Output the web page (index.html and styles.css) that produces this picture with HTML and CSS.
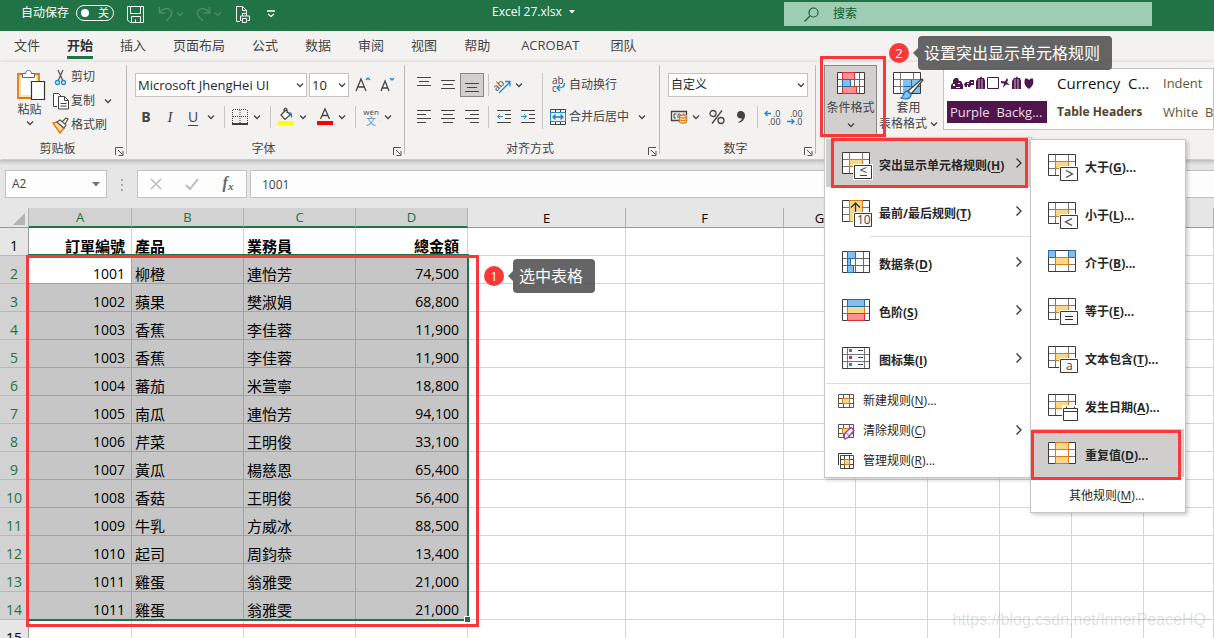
FILE: index.html
```html
<!DOCTYPE html>
<html lang="zh-CN">
<head>
<meta charset="utf-8">
<title>Excel 27.xlsx</title>
<link rel="stylesheet" href="styles.css">
</head>
<body>
<svg class="sprite" aria-hidden="true">
  <symbol id="chev" viewBox="0 0 8 6"><path d="M1 1.500l3 3 3-3" fill="none" stroke="currentColor" stroke-width="1.300"/></symbol>
  <symbol id="arrow-r" viewBox="0 0 8 12"><path d="M1.500 1.500L6 6l-4.500 4.500" fill="none" stroke="#333" stroke-width="1.300"/></symbol>
  <symbol id="launcher" viewBox="0 0 9 9"><path d="M.5 8V.5H8M3 3l4.500 4.500M8 4v4.500H3.500" fill="none" stroke="#555" stroke-width="1"/></symbol>
  <symbol id="grid" viewBox="0 0 28 22"><path d="M.5.5h27v21H.5z" fill="#fff"/><path d="M7.500 1v20M20.500 1v20M1 7.500h26M1 14.500h26" stroke="#777" fill="none"/><path d="M.5.5h27v21H.5z" fill="none" stroke="#3b3838"/></symbol>
  <symbol id="grid-mid" viewBox="0 0 31 28"><use href="#grid" width="28" height="22"/><path d="M7.500 7.500h13v7h-13z" fill="#fad88a" stroke="#e07a10"/><path d="M11 12h20v16H11z" fill="#fff"/><path d="M12.500 13.500h17v13h-17z" fill="#fafafa" stroke="#3b3838"/></symbol>
</svg>

<header class="titlebar">
  <div class="quick">
    <span class="autosave" id="autosave">自动保存</span>
    <button class="switch" role="switch" aria-checked="false" aria-labelledby="autosave"><i></i><span>关</span></button>
    <button class="qbtn save" aria-label="保存"><svg width="17" height="17" fill="none" stroke="#fff"><path d="M.5.5h16v16H3L.5 14zM3.500.5v7h10v-7M4.500 16.500v-6h9v6M8.500 13.500v3"/></svg></button>
    <button class="qbtn dim" aria-label="撤消"><svg width="15" height="16" fill="none" stroke="currentColor" stroke-width="1.500"><path d="M1.500 1v6h6M1.500 7C4 3 9 1 12 4s2 5-1 8l-3 3"/></svg></button>
    <button class="qbtn dim tiny" aria-label="撤消选项"><svg width="8" height="6"><use href="#chev"/></svg></button>
    <button class="qbtn dim redo" aria-label="恢复"><svg width="15" height="16" fill="none" stroke="currentColor" stroke-width="1.500"><path d="M13.500 1v6h-6M13.500 7C11 3 6 1 3 4s-2 5 1 8l3 3"/></svg></button>
    <button class="qbtn dim tiny" aria-label="恢复选项"><svg width="8" height="6"><use href="#chev"/></svg></button>
    <button class="qbtn print" aria-label="打印预览"><svg width="14" height="17" fill="none" stroke="#fff"><path d="M4 15.500H.5V.5h6l4 4V7M6.500.5v4h4M6.500 10V7.500h4V10M5.500 14.500h-1v-4.500h9v4.500h-2M6.500 12.500h4v4h-4z"/></svg></button>
    <button class="qbtn custom" aria-label="自定义快速访问工具栏"><svg width="8" height="8" fill="none" stroke="#fff"><path d="M0 1h8" stroke-width="1.500"/><path d="M1 4l3 2.500L7 4" stroke-width="1.300"/></svg></button>
  </div>
  <button class="docname">Excel 27.xlsx <svg width="6" height="4"><path d="M0 0h6L3 3.500z" fill="#fff"/></svg></button>
  <label class="search"><svg width="15" height="15" fill="none" stroke="#17603a" stroke-width="1.200"><circle cx="9.500" cy="5.500" r="4.500"/><path d="M6 9l-5.500 5.500"/></svg><input type="text" placeholder="搜索" aria-label="搜索"></label>
</header>

<nav class="tabs">
  <a href="#">文件</a><a href="#" class="active">开始</a><a href="#">插入</a><a href="#">页面布局</a><a href="#">公式</a><a href="#">数据</a><a href="#">审阅</a><a href="#">视图</a><a href="#">帮助</a><a href="#" class="addin">ACROBAT</a><a href="#">团队</a>
</nav>

<div class="ribbon">
  <section class="group clipboard">
    <div class="clip-body">
      <button class="paste"><svg width="28" height="31" fill="none"><path d="M1 5h21v24H1z" fill="#fbe3ae" stroke="#e07a10" stroke-width="1.800"/><path d="M4 8h15v18H4z" fill="#fff"/><path d="M5.500 8.500v-4h3c0-4 6-4 6 0h3v4z" fill="#fff" stroke="#666"/><path d="M14.500 12.500h13v18h-13z" fill="#fff" stroke="#333" stroke-width="1.200"/></svg><span>粘贴</span><svg class="chev" width="8" height="6"><use href="#chev"/></svg></button>
      <div class="clip-list">
        <button><svg width="18" height="17" fill="none"><path d="M6 1l5 11M11 1L6 12" stroke="#555" stroke-width="1.300"/><circle cx="5.500" cy="13.500" r="2" stroke="#1e88cf" stroke-width="1.300"/><circle cx="11.500" cy="13.500" r="2" stroke="#1e88cf" stroke-width="1.300"/></svg>剪切</button>
        <button><svg width="18" height="17" fill="none" stroke="#444"><path d="M5 13.500H1.500v-13h5l3 3M6.500 3.500h6l4 4v8.500h-10zM12.500 3.500v4h4" fill="#fff"/><path d="M8.500 10.500h6M8.500 13h6"/></svg>复制<svg class="chev gap-copy" width="8" height="6"><use href="#chev"/></svg></button>
        <button><svg width="18" height="17" fill="none"><path d="M1 6l4-1 7 6-4 5z" fill="#fcd9a0" stroke="#e07a10" stroke-width="1.400"/><path d="M5 5l3-2 6 5-2 3zM10 5l4-4 2 1-3 5" fill="#fff" stroke="#555" stroke-width="1.200"/></svg>格式刷</button>
      </div>
    </div>
    <footer><span>剪贴板</span><button aria-label="剪贴板设置"><svg width="9" height="9"><use href="#launcher"/></svg></button></footer>
  </section>

  <section class="group font">
    <div class="row fields">
      <div class="pick name"><select aria-label="字体"><option>Microsoft JhengHei UI</option></select><svg width="8" height="6"><use href="#chev"/></svg></div>
      <div class="pick size"><select aria-label="字号"><option>10</option></select><svg width="8" height="6"><use href="#chev"/></svg></div>
      <button class="w24" aria-label="增大字号"><svg width="16" height="17" fill="none"><path d="M0 14L5 2l5 12M2 10h6" stroke="#444" stroke-width="1.300"/><path d="M10 3l2-2 2 2" stroke="#1e88cf" stroke-width="1.300"/></svg></button>
      <button class="w24" aria-label="减小字号"><svg width="16" height="17" fill="none"><path d="M1 14L5 4l4 10M2.500 11h5" stroke="#444" stroke-width="1.300"/><path d="M10 1l2 2 2-2" stroke="#1e88cf" stroke-width="1.300"/></svg></button>
    </div>
    <div class="row">
      <button class="w24 bold">B</button><button class="w24 ital">I</button><button class="w22 under">U</button><button class="more" aria-label="下划线选项"><svg width="8" height="6"><use href="#chev"/></svg></button><hr>
      <button class="w20" aria-label="边框"><svg width="16" height="16" fill="none" stroke="#444"><path d="M.5 1v13M15.500 1v13M8 1v13M1 .5h14M1 7.500h14" stroke-dasharray="1 1"/><path d="M0 15h16" stroke="#000" stroke-width="1.500"/></svg></button><button class="more" aria-label="边框选项"><svg width="8" height="6"><use href="#chev"/></svg></button><hr>
      <button class="w20" aria-label="填充颜色"><svg width="16" height="18" fill="none"><path d="M0 13h16v4H0z" fill="#ff0"/><path d="M3 7l5-5 4 5-5 4.500zM6 4V1.500C7-.5 9 0 9 2v3" fill="#fff" stroke="#444" stroke-width="1.200"/><path d="M11 4c3 0 3.500 3 3 6-1-1-2-3-3-6z" fill="#1e78bf"/></svg></button><button class="more" aria-label="填充选项"><svg width="8" height="6"><use href="#chev"/></svg></button>
      <button class="w20 fcolor" aria-label="字体颜色"><svg width="16" height="18" fill="none"><path d="M0 13h16v4H0z" fill="#f00"/><path d="M3.500 11L8 .8 12.500 11M5 7.500h6" stroke="#444" stroke-width="1.300"/></svg></button><button class="more" aria-label="颜色选项"><svg width="8" height="6"><use href="#chev"/></svg></button><hr>
      <button class="w20 pinyin"><span>wén</span><b>文</b></button><button class="more" aria-label="拼音选项"><svg width="8" height="6"><use href="#chev"/></svg></button>
    </div>
    <footer><span>字体</span><button aria-label="字体设置"><svg width="9" height="9"><use href="#launcher"/></svg></button></footer>
  </section>

  <section class="group align">
    <div class="align-body">
      <div class="align-left">
        <div class="row">
          <button class="w24" aria-label="顶端对齐"><svg class="ln" width="14" height="16"><path d="M0 .5h14M2 4.500h10M0 8.500h14"/></svg></button><button class="w24" aria-label="垂直居中"><svg class="ln" width="14" height="16"><path d="M0 3.500h14M2 7.500h10M0 11.500h14"/></svg></button><button class="w24 on" aria-label="底端对齐"><svg class="ln" width="14" height="16"><path d="M0 6.500h14M2 10.500h10M0 14.500h14"/></svg></button><hr class="slim">
          <button class="w20" aria-label="方向"><svg width="16" height="16" fill="none"><text x="-2" y="11" transform="rotate(-42 5 7)" class="ab">ab</text><path d="M5 16L16 5M11 4.500h5v5" stroke="#1e88cf" stroke-width="1.300"/></svg></button><button class="more" aria-label="方向选项"><svg width="8" height="6"><use href="#chev"/></svg></button>
        </div>
        <div class="row">
          <button class="w24" aria-label="左对齐"><svg class="ln" width="14" height="14"><path d="M0 .5h14M0 4.500h9M0 8.500h14M0 12.500h9"/></svg></button><button class="w24" aria-label="居中"><svg class="ln" width="14" height="14"><path d="M0 .5h14M2 4.500h10M0 8.500h14M2 12.500h10"/></svg></button><button class="w24" aria-label="右对齐"><svg class="ln" width="14" height="14"><path d="M0 .5h14M5 4.500h9M0 8.500h14M5 12.500h9"/></svg></button><hr class="slim">
          <button class="w24" aria-label="减少缩进量"><svg class="ln" width="14" height="14"><path d="M0 .5h14M8 4.500h6M8 8.500h6M0 12.500h14"/><path d="M6 6.500H.8M3 4L.7 6.500 3 9" stroke="#1e88cf"/></svg></button><button class="w24" aria-label="增加缩进量"><svg class="ln" width="14" height="14"><path d="M0 .5h14M8 4.500h6M8 8.500h6M0 12.500h14"/><path d="M0 6.500h5.200M3 4l2.300 2.500L3 9" stroke="#1e88cf"/></svg></button>
        </div>
      </div>
      <div class="align-right">
        <button class="row wide"><svg width="16" height="18" fill="none"><text x="2" y="8" class="ab">ab</text><text x="2" y="16" class="ab">c</text><path d="M14.500 7c0 4-2 5-7 5M10 9l-3 3 3 3" stroke="#1e88cf" stroke-width="1.400"/></svg>自动换行</button>
        <button class="row wide"><svg width="16" height="16" fill="none" stroke="#444"><path d="M.5.5h15v15H.5zM5.500.5v3M10.500.5v3M5.500 12.500v3M10.500 12.500v3"/><path d="M.5 3.500h15v9H.5z" fill="#eaf4fb" stroke="#1e88cf"/><path d="M3 8h10M5.500 5.500L3 8l2.500 2.500M10.500 5.500L13 8l-2.500 2.500" stroke="#1e78bf" stroke-width="1.300"/></svg>合并后居中<svg class="chev gap-merge" width="8" height="6"><use href="#chev"/></svg></button>
      </div>
    </div>
    <footer><span>对齐方式</span><button aria-label="对齐设置"><svg width="9" height="9"><use href="#launcher"/></svg></button></footer>
  </section>

  <section class="group number">
    <div class="row fields"><div class="pick wide"><select aria-label="数字格式"><option>自定义</option></select><svg width="8" height="6"><use href="#chev"/></svg></div></div>
    <div class="row">
      <button class="w22" aria-label="会计数字格式"><svg width="17" height="14" fill="none"><path d="M9 10.500H1.500v-9h15V5" stroke="#444" stroke-width="1.300"/><path d="M6.500 4H4v4h2M8 8V5c0-1.500 2.500-1.500 2.500 0M13 4h1.500" stroke="#444"/><path d="M9.500 6.500v5c0 2 7 2 7 0v-5c0-2-7-2-7 0z" fill="#fff" stroke="#e07a10" stroke-width="1.300"/><path d="M9.500 6.500c0 2 7 2 7 0M9.500 9c0 2 7 2 7 0" stroke="#e07a10" stroke-width="1.300"/></svg></button><button class="more" aria-label="货币选项"><svg width="8" height="6"><use href="#chev"/></svg></button>
      <button class="w28" aria-label="百分比"><svg width="16" height="16" fill="none" stroke="#444" stroke-width="1.300"><circle cx="4" cy="4.500" r="3"/><circle cx="12" cy="11.500" r="3"/><path d="M13 1.500L3 14.500"/></svg></button>
      <button class="w20" aria-label="千位分隔"><svg width="10" height="16"><path d="M4.500 2c3 0 4.500 2 4.500 4.500 0 4-3 6.500-6.500 7.500v-1.200C4.500 12 6 10.800 6 9.500 3 10 1 8.500 1 6s1.500-4 3.500-4z" fill="#444"/></svg></button><hr>
      <button class="w20" aria-label="增加小数位"><svg width="16" height="17"><text x="8" y="8" class="dec">.0</text><text x="3" y="16" class="dec">.00</text><path d="M6 4.500H0M2.500 2L0 4.500 2.500 7" fill="none" stroke="#1e88cf" stroke-width="1.300"/></svg></button><button class="w24" aria-label="减少小数位"><svg width="16" height="17"><text x="3" y="8" class="dec">.00</text><text x="8" y="16" class="dec">.0</text><path d="M0 12.500h7M4.500 10L7 12.500 4.500 15" fill="none" stroke="#1e88cf" stroke-width="1.300"/></svg></button>
    </div>
    <footer><span>数字</span><button aria-label="数字设置"><svg width="9" height="9"><use href="#launcher"/></svg></button></footer>
  </section>

  <section class="group styles">
    <button class="big pressed" aria-expanded="true"><svg width="28" height="22" fill="none"><path d="M.5.5h27v21H.5z" fill="#fff"/><path d="M5.500 1v20M17.500 1v20M22.500 1v20M1 7.500h26M1 14.500h26" stroke="#666"/><path d="M.5.5h27v21H.5z" stroke="#3b3838"/><path d="M5.500.5h12v7h-12zM5.500 14.500h14v7h-14z" fill="#ff9090" stroke="#d8302f"/><path d="M5.500 7.500h8v7h-8z" fill="#83beec" stroke="#1a6fb5"/></svg><span>条件格式</span><svg class="chev" width="8" height="6"><use href="#chev"/></svg></button>
    <button class="big table"><svg width="31" height="28" fill="none"><use href="#grid" width="28" height="22"/><path d="M10 8h17v13H10z" fill="#83beec"/><path d="M10.500 14.500H27M18.500 8v13" stroke="#1a6fb5"/><path d="M29 7L15 19l3 3L30 8z" fill="#fff" stroke="#444" stroke-width="1.200"/><path d="M14 19c-4 0-3 6-6 7 5 2 10 1 10-4z" fill="#83beec" stroke="#1a6fb5" stroke-width="1.200"/></svg><span>套用</span><span>表格格式 <svg class="chev" width="8" height="6"><use href="#chev"/></svg></span></button>
    <div class="gallery">
      <button class="g-icons" aria-label="节日样式"><svg width="84" height="14" fill="#4f164c"><path d="M0 12V9l2-2V4l2-2h3l1 3h2l2 4v4H0z"/><path d="M2 8h2v2H2zM7 7h2v1H7zM5 11h4v1H5z" fill="#fff"/><path d="M13 8l2-2h3l1-2h4v5h-3l-1 2h-2V9h-1v2h-2z"/><path d="M16 7h2v1h-2zM20 6h2v1h-2z" fill="#fff"/><path d="M25 5l2-3h2l1-2 1 2h2l1 3v8h-9z"/><path d="M28 3v10M31 3v10" stroke="#fff" stroke-width=".7"/><path d="M36.500 1.500h11v11h-11z" fill="#fff" stroke="#4f164c"/><path d="M50 5l4 .5L56 2l1 2-1 2.500 3 2.500-4-.5-3 3.500 1-4.500-3-.5z"/><path d="M61 5l2-3h2l1-2 1 2h2l1 3v8h-9z"/><path d="M64 3v10M67 3v10" stroke="#fff" stroke-width=".7"/><path d="M78 13c-5-3-5-7-4-10 2-1 3 0 4 1 1-1 3-2 4-1 1 4 0 7-4 10z"/></svg></button><button class="g-cur">Currency&nbsp; C...</button><button class="g-brown">Indent</button>
      <button class="g-purple">Purple&nbsp; Backg...</button><button class="g-head">Table Headers</button><button class="g-brown">White&nbsp; Ba</button>
    </div>
  </section>
</div>

<div class="formula">
  <div class="namebox"><input type="text" value="A2" aria-label="名称框"><svg width="8" height="5"><path d="M0 0h8L4 4.500z" fill="#777"/></svg></div>
  <svg class="dots" width="3" height="12" fill="#aaa"><path d="M0 0h2v2H0zM0 5h2v2H0zM0 10h2v2H0z"/></svg>
  <div class="fx">
    <button aria-label="取消"><svg width="12" height="12"><path d="M1 1l10 10M11 1L1 11" stroke="#bbb" stroke-width="1.500"/></svg></button>
    <button aria-label="输入"><svg width="14" height="12" fill="none"><path d="M1 7l4 4L13 1" stroke="#bbb" stroke-width="2"/></svg></button>
    <button class="fxi" aria-label="插入函数">f<small>x</small></button>
  </div>
  <input class="fvalue" type="text" value="1001" aria-label="编辑栏">
</div>

<main class="sheet">
  <table>
    <colgroup><col class="c-row"><col class="c-a"><col class="c-m"><col class="c-m"><col class="c-m"><col class="c-l"><col class="c-l"><col class="c-s"><col class="c-s"><col class="c-s"><col class="c-s"><col class="c-s"><col></colgroup>
    <thead><tr><th class="corner"><svg width="13" height="13"><path d="M12 0v12H0z" fill="#b4b4b4"/></svg></th><th class="sel">A</th><th class="sel">B</th><th class="sel">C</th><th class="sel">D</th><th>E</th><th>F</th><th>G</th><th></th><th></th><th></th><th></th><th></th></tr></thead>
    <tbody>
      <tr class="head"><th>1</th><td>訂單編號</td><td>產品</td><td>業務員</td><td>總金額</td><td></td><td></td><td></td><td></td><td></td><td></td><td></td><td></td></tr>
      <tr class="pick-row"><th>2</th><td class="cur">1001</td><td>柳橙</td><td>連怡芳</td><td>74,500</td><td></td><td></td><td></td><td></td><td></td><td></td><td></td><td></td></tr>
      <tr class="pick-row"><th>3</th><td>1002</td><td>蘋果</td><td>樊淑娟</td><td>68,800</td><td></td><td></td><td></td><td></td><td></td><td></td><td></td><td></td></tr>
      <tr class="pick-row"><th>4</th><td>1003</td><td>香蕉</td><td>李佳蓉</td><td>11,900</td><td></td><td></td><td></td><td></td><td></td><td></td><td></td><td></td></tr>
      <tr class="pick-row"><th>5</th><td>1003</td><td>香蕉</td><td>李佳蓉</td><td>11,900</td><td></td><td></td><td></td><td></td><td></td><td></td><td></td><td></td></tr>
      <tr class="pick-row"><th>6</th><td>1004</td><td>蕃茄</td><td>米萱寧</td><td>18,800</td><td></td><td></td><td></td><td></td><td></td><td></td><td></td><td></td></tr>
      <tr class="pick-row"><th>7</th><td>1005</td><td>南瓜</td><td>連怡芳</td><td>94,100</td><td></td><td></td><td></td><td></td><td></td><td></td><td></td><td></td></tr>
      <tr class="pick-row"><th>8</th><td>1006</td><td>芹菜</td><td>王明俊</td><td>33,100</td><td></td><td></td><td></td><td></td><td></td><td></td><td></td><td></td></tr>
      <tr class="pick-row"><th>9</th><td>1007</td><td>黃瓜</td><td>楊慈恩</td><td>65,400</td><td></td><td></td><td></td><td></td><td></td><td></td><td></td><td></td></tr>
      <tr class="pick-row"><th>10</th><td>1008</td><td>香菇</td><td>王明俊</td><td>56,400</td><td></td><td></td><td></td><td></td><td></td><td></td><td></td><td></td></tr>
      <tr class="pick-row"><th>11</th><td>1009</td><td>牛乳</td><td>方威冰</td><td>88,500</td><td></td><td></td><td></td><td></td><td></td><td></td><td></td><td></td></tr>
      <tr class="pick-row"><th>12</th><td>1010</td><td>起司</td><td>周鈞恭</td><td>13,400</td><td></td><td></td><td></td><td></td><td></td><td></td><td></td><td></td></tr>
      <tr class="pick-row"><th>13</th><td>1011</td><td>雞蛋</td><td>翁雅雯</td><td>21,000</td><td></td><td></td><td></td><td></td><td></td><td></td><td></td><td></td></tr>
      <tr class="pick-row"><th>14</th><td>1011</td><td>雞蛋</td><td>翁雅雯</td><td>21,000</td><td></td><td></td><td></td><td></td><td></td><td></td><td></td><td></td></tr>
      <tr><th>15</th><td></td><td></td><td></td><td></td><td></td><td></td><td></td><td></td><td></td><td></td><td></td><td></td></tr>
    </tbody>
  </table>
  <div class="selection"><i></i></div>
</main>

<div class="menu main-menu" role="menu">
  <button class="item hot" role="menuitem"><svg width="31" height="28"><use href="#grid-mid"/><path d="M24.500 15.500l-6 2.500 6 2.500M18 23.500h7" fill="none" stroke="#444"/></svg><span>突出显示单元格规则(<u>H</u>)</span><svg class="go" width="8" height="12"><use href="#arrow-r"/></svg></button>
  <button class="item" role="menuitem"><svg width="31" height="28" fill="none"><use href="#grid" width="28" height="22"/><path d="M7.500.5h13v21h-13z" fill="#fad88a" stroke="#e07a10"/><path d="M13.500 21V3M9 7.500L13.500 3 18 7.500" stroke="#333" stroke-width="1.300"/><path d="M11 12h20v16H11z" fill="#fff"/><path d="M12.500 13.500h17v13h-17z" fill="#fafafa" stroke="#3b3838"/><text x="15" y="24" class="glyph">10</text></svg><span>最前/最后规则(<u>T</u>)</span><svg class="go" width="8" height="12"><use href="#arrow-r"/></svg></button>
  <hr class="indent">
  <button class="item" role="menuitem"><svg width="31" height="28" fill="none"><path d="M.5.5h27v21H.5z" fill="#fff"/><path d="M5.500 1v20M13.500 1v20M21.500 1v20M1 7.500h26M1 14.500h26" stroke="#666"/><path d="M.5.5h27v21H.5z" stroke="#3b3838"/><path d="M5.500.5h8v7h-8zM5.500 7.500h3v7h-3zM5.500 14.500h6v7h-6z" fill="#83beec" stroke="#1a6fb5"/></svg><span>数据条(<u>D</u>)</span><svg class="go" width="8" height="12"><use href="#arrow-r"/></svg></button>
  <button class="item" role="menuitem"><svg width="31" height="28" fill="none"><path d="M.5.5h27v21H.5z" fill="#fff"/><path d="M1 7.500h26M1 14.500h26" stroke="#777"/><path d="M.5.5h27v21H.5z" stroke="#3b3838"/><path d="M5.500 7.500h17v7h-17z" fill="#fad88a" stroke="#e07a10"/><path d="M5.500.5h17v7h-17z" fill="#83beec" stroke="#1a6fb5"/><path d="M5.500 14.500h17v7h-17z" fill="#ff9090" stroke="#d8302f"/></svg><span>色阶(<u>S</u>)</span><svg class="go" width="8" height="12"><use href="#arrow-r"/></svg></button>
  <button class="item" role="menuitem"><svg width="31" height="28" fill="none"><path d="M.5.5h27v21H.5z" fill="#fff"/><path d="M5.500 1v20M22.500 1v20M1 7.500h26M1 14.500h26" stroke="#777"/><path d="M.5.5h27v21H.5z" stroke="#3b3838"/><path d="M16 3.500h5M16 10.500h5M16 17.500h5" stroke="#444"/><path d="M7 2h3v3H7zM7 16h3v3H7z" fill="#1e88cf"/><path d="M7 9h3v3H7z" fill="#d8302f"/></svg><span>图标集(<u>I</u>)</span><svg class="go" width="8" height="12"><use href="#arrow-r"/></svg></button>
  <hr>
  <button class="item small" role="menuitem"><svg width="16" height="16" fill="none"><path d="M.5 1.500h15v13H.5zM5.500 2v12M11.500 2v12M1 5.500h14M1 10.500h14" fill="#fff" stroke="#555"/><path d="M4.500 5.500h7v5h-7z" fill="#fad88a" stroke="#e07a10"/></svg><span>新建规则(<u>N</u>)...</span></button>
  <button class="item small" role="menuitem"><svg width="16" height="16" fill="none"><path d="M.5 1.500h15v13H.5zM5.500 2v12M11.500 2v12M1 5.500h14M1 10.500h14" fill="#fff" stroke="#555"/><path d="M4.500 5.500h7v5h-7z" fill="#fad88a" stroke="#e07a10"/><path d="M6 14l1-4 6-5.500 3 3-5.500 6.500-3.500 2z" fill="#fff" stroke="#9b3fb0" stroke-width="1.400"/><path d="M8 9.500l3.500 3.500" stroke="#9b3fb0"/></svg><span>清除规则(<u>C</u>)</span><svg class="go" width="8" height="12"><use href="#arrow-r"/></svg></button>
  <button class="item small" role="menuitem"><svg width="16" height="16" fill="none"><path d="M.5 12V.5H14" stroke="#333"/><path d="M2.500 2.500h13v13h-13zM6.500 3v12M11.500 3v12M3 6.500h12M3 11.500h12" fill="#fff" stroke="#444"/><path d="M6.500 6.500h5v5h-5z" fill="#fad88a" stroke="#e07a10"/></svg><span>管理规则(<u>R</u>)...</span></button>
</div>

<div class="menu sub-menu" role="menu">
  <button class="item" role="menuitem"><svg width="31" height="28"><use href="#grid-mid"/><path d="M18 16.500l6.500 3.500-6.500 3.500" fill="none" stroke="#444" stroke-width="1.200"/></svg><span>大于(<u>G</u>)...</span></button>
  <button class="item" role="menuitem"><svg width="31" height="28"><use href="#grid-mid"/><path d="M24 16.500L17.500 20l6.500 3.500" fill="none" stroke="#444" stroke-width="1.200"/></svg><span>小于(<u>L</u>)...</span></button>
  <button class="item" role="menuitem"><svg width="31" height="28" fill="none"><use href="#grid" width="28" height="22"/><path d="M7.500 7.500h13v7h-13z" fill="#fad88a" stroke="#e07a10"/><path d="M.5.5h7v7h-7zM20.500.5h7v7h-7z" fill="#83beec" stroke="#1a6fb5"/></svg><span>介于(<u>B</u>)...</span></button>
  <button class="item" role="menuitem"><svg width="31" height="28"><use href="#grid-mid"/><path d="M17 18.500h8M17 21.500h8" fill="none" stroke="#333"/></svg><span>等于(<u>E</u>)...</span></button>
  <button class="item" role="menuitem"><svg width="31" height="28"><use href="#grid-mid"/><text x="18" y="24" class="glyph">a</text></svg><span>文本包含(<u>T</u>)...</span></button>
  <button class="item" role="menuitem"><svg width="31" height="28" fill="none"><use href="#grid" width="28" height="22"/><path d="M7.500 7.500h13v7h-13z" fill="#fad88a" stroke="#e07a10"/><path d="M14 11h17v17H14z" fill="#fff"/><path d="M15.500 14.500h14v12h-14zM15.500 17.500h14M18.500 12.500v2M26.500 12.500v2" stroke="#3b3838"/></svg><span>发生日期(<u>A</u>)...</span></button>
  <button class="item hot" role="menuitem"><svg width="31" height="28" fill="none"><use href="#grid" width="28" height="22"/><path d="M7.500.5h13v7h-13zM7.500 14.500h13v7h-13z" fill="#fad88a" stroke="#e07a10"/><path d="M7.500 7v8M20.500 7v8" stroke="#e07a10"/></svg><span>重复值(<u>D</u>)...</span></button>
  <hr>
  <button class="item small" role="menuitem"><span>其他规则(<u>M</u>)...</span></button>
</div>

<div class="mark mark-table"></div>
<div class="mark mark-button"></div>
<div class="mark mark-highlight"></div>
<div class="mark mark-duplicate"></div>
<div class="note note-one"><b>1</b><span>选中表格</span></div>
<div class="note note-two"><b>2</b><span>设置突出显示单元格规则</span></div>
<div class="watermark">https://blog.csdn.net/InnerPeaceHQ</div>
</body>
</html>
```

FILE: styles.css
```css
* { box-sizing: border-box; }
html { height: 100%; }
body {
  margin: 0;
  height: 100%;
  display: flex;
  flex-direction: column;
  position: relative;
  overflow: hidden;
  background: #fff;
  color: #444;
  font: 12px/16px "Open Sans", "Noto Sans CJK SC", sans-serif;
}
button, input, select { font: inherit; color: inherit; }
button { background: none; border: 0; padding: 0; margin: 0; }
svg { display: block; flex: none; overflow: visible; }
hr { margin: 0; border: 0; }
.sprite { position: absolute; width: 0; height: 0; }

/* title bar */
.titlebar { flex: none; height: 31px; background: #217346; color: #fff; position: relative; display: flex; padding-left: 21px; }
.quick { display: flex; align-items: center; height: 28px; flex: 1; }
.autosave { width: 55px; line-height: 26px; height: 28px; }
.switch { width: 38px; height: 16px; border: 1px solid #fff; border-radius: 8px; display: flex; align-items: center; justify-content: space-between; padding: 0 4px; font-size: 11px; line-height: 12px; margin-bottom: 2px; }
.switch i { width: 8px; height: 8px; border-radius: 50%; background: #fff; }
.qbtn { height: 24px; display: flex; align-items: center; justify-content: center; width: 17px; }
.save { margin: 0 13px; }
.dim { color: #4c8c69; }
.tiny { width: 12px; }
.redo { margin-left: 9px; }
.print { margin-left: 10px; }
.custom { margin-left: 11px; }
.docname { position: absolute; left: 492px; top: 4px; display: flex; align-items: center; gap: 7px; }
.search { width: 368px; height: 24px; margin: 2px 62px 0 0; background: #9fcdb3; color: #0c5a30; display: flex; align-items: center; padding-left: 20px; gap: 14px; }
.search input { flex: 1; min-width: 0; border: 0; padding: 0; background: none; }
.search input::placeholder { color: #0c5a30; opacity: 1; }

/* tabs */
.tabs { flex: none; height: 31px; background: #f3f2f1; display: flex; gap: 27px; padding: 4px 0 0 14px; font-size: 13px; line-height: 20px; }
.tabs a { color: #444; text-decoration: none; height: 24px; }
.tabs .active { font-weight: bold; color: #333; border-bottom: 3px solid #217346; }
.tabs .addin { padding: 0 4px; }

/* ribbon */
.ribbon { flex: none; height: 97px; background: #f3f2f1; display: flex; padding: 3px 0 5px; box-shadow: 0 1px 4px #aaa; position: relative; }
.group { height: 89px; padding-top: 8px; border-right: 1px solid #b8b8b8; display: flex; flex-direction: column; gap: 8px; flex: none; position: relative; }
.group footer { margin-top: auto; height: 10px; line-height: 14px; display: flex; align-items: center; padding-right: 2px; }
.group footer span { flex: 1; text-align: center; }
.group footer button { height: 9px; margin-top: 4px; }
.row { display: flex; align-items: center; height: 24px; }
.row button, .row.wide { display: flex; align-items: center; justify-content: center; height: 24px; }
.row hr { width: 12px; height: 22px; flex: none; background: linear-gradient(#c8c6c4, #c8c6c4) center / 1px 100% no-repeat; }
.row hr.slim { width: 8px; }
.w20 { width: 20px; } .w22 { width: 22px; } .w24 { width: 24px; } .w28 { width: 28px; }
.more { width: 14px; }
.ln { fill: none; stroke: #444; stroke-width: 1; }
.ab { font: 10px "Open Sans", sans-serif; fill: #444; }
.dec { font: 9px "Open Sans", sans-serif; fill: #444; }

.clipboard { width: 127px; padding-top: 0; gap: 0; }
.clip-body { display: flex; }
.paste { width: 50px; padding: 4px 0 0 9px; display: flex; flex-direction: column; align-items: center; gap: 2px; }
.paste > svg:first-child { margin-left: 3px; }
.clip-list { display: flex; flex-direction: column; padding-left: 2px; }
.clip-list button { display: flex; align-items: center; gap: 1px; height: 24px; }
.gap-copy { margin-left: 8px; }
.gap-merge { margin-left: 6px; }

.font { width: 278px; padding-left: 7px; }
.fields { padding-left: 1px; }
.pick { position: relative; height: 24px; }
.pick select { appearance: none; width: 100%; height: 24px; border: 1px solid #c4c2c0; border-radius: 0; background: #fff; padding: 0 2px; color: #262626; }
.pick svg { position: absolute; right: 3px; top: 9px; }
.pick.name { width: 172px; margin-right: 2px; }
.pick.name select, .pick.size select { font-size: 13px; }
.pick.size { width: 40px; margin-right: 3px; }
.pick.wide { width: 140px; }
.bold { font-weight: bold; font-size: 14px; }
.ital { font: italic 15px "Liberation Serif", serif; }
.under { font-size: 14px; text-decoration: underline; text-underline-offset: 3px; }
.row .fcolor { margin-left: 5px; }
.row .pinyin { flex-direction: column; font-size: 8px; line-height: 8px; }
.pinyin b { color: #4a9bd4; font-weight: normal; font-size: 10px; line-height: 10px; }

.align { width: 255px; padding-left: 7px; }
.align-body { display: flex; }
.align-left { width: 130px; }
.align-left, .align-right { display: flex; flex-direction: column; gap: 8px; }
.align-right { border-left: 1px solid #c8c6c4; padding-left: 7px; }
.align-right .row.wide { justify-content: flex-start; gap: 3px; }
.on { background: #d2d0ce; border: 1px solid #8a8886; }

.number { width: 156px; padding-left: 7px; }

.styles { flex: 1 1 0; min-width: 0; flex-direction: row; gap: 0; padding: 0 0 0 8px; border: 0; }
.big { height: 72px; display: flex; flex-direction: column; align-items: center; white-space: nowrap; }
.pressed { width: 53px; background: #d2d0ce; border: 1px solid #8a8886; height: 75px; padding-top: 6px; gap: 6px; }
.table { width: 66px; padding: 7px 3px 0 0; }
.table span { display: flex; align-items: center; gap: 3px; }
.gallery { flex: 1; min-width: 0; height: 62px; margin-top: 3px; background: #fff; border: 1px solid #c4c2c0; display: grid; grid-template-columns: 100px 100px 1fr; column-gap: 3px; grid-template-rows: 22px 22px; row-gap: 7px; padding: 3px 0 0 3px; overflow: hidden; color: #222; }
.gallery button { text-align: left; white-space: nowrap; overflow: hidden; padding-left: 7px; font-size: 13px; min-width: 0; }
.gallery .g-icons { padding-left: 4px; }
.gallery .g-cur { font-size: 15px; line-height: 20px; color: #111; }
.gallery .g-brown { color: #63553a; padding-left: 10px; }
.gallery .g-purple { background: #4f164c; color: #ecdcec; padding-left: 3px; }
.gallery .g-head { font-weight: bold; font-size: 12px; color: #4e432f; }

/* formula bar */
.formula { flex: none; height: 48px; background: linear-gradient(#cfcfcf, #e6e6e6 5px); display: flex; align-items: flex-start; padding: 10px 0 0 5px; margin-top: 1px; }
.namebox, .fx, .fvalue { height: 28px; border: 1px solid #c2c2c2; background: #fdfdfd; }
.namebox { width: 102px; display: flex; align-items: center; padding: 0 6px; }
.namebox input { border: 0; padding: 0; width: 80px; background: none; margin-right: auto; }
.dots { margin: 9px 13px 0 14px; }
.fx { width: 110px; display: flex; align-items: center; justify-content: space-around; margin-right: 3px; }
.fx button { width: 24px; display: flex; justify-content: center; }
.fxi { font: italic bold 16px/20px "Liberation Serif", serif; color: #666; }
.fxi small { font-size: 11px; padding-top: 3px; }
.fvalue { flex: 1; min-width: 0; border-right: 0; border-radius: 0; padding: 0 11px; font-size: 12px; }

/* sheet */
.sheet { flex: 1; min-height: 0; position: relative; overflow: hidden; }
table { width: 100%; table-layout: fixed; border-collapse: separate; border-spacing: 0; color: #000; font: 14px/18px "Open Sans", "Noto Sans CJK TC", sans-serif; }
.c-row { width: 29px; } .c-a { width: 103px; } .c-m { width: 112px; } .c-l { width: 158px; } .c-s { width: 72px; }
th { font-weight: normal; background: #e6e6e6; padding: 0; }
thead th { height: 20px; line-height: 16px; font-size: 13px; border-right: 1px solid #b0b0b0; border-bottom: 1px solid #999; }
thead th.sel { background: #d2d2d2; color: #217346; border-bottom: 2px solid #217346; }
.corner svg { margin: 3px 0 0 13px; }
tbody th { border-right: 1px solid #999; border-bottom: 1px solid #b8b8b8; vertical-align: bottom; }
td { height: 28px; padding: 0 3px; border-right: 1px solid #d4d4d4; border-bottom: 1px solid #d4d4d4; vertical-align: bottom; white-space: nowrap; }
td:nth-child(2), td:nth-child(5) { text-align: right; padding-right: 8px; }
td:nth-child(2) { padding-right: 6px; }
td:nth-child(3), td:nth-child(4), .head td { font-size: 15px; }
.head td { font-weight: bold; }
.pick-row th { background: #d2d2d2; color: #217346; }
.pick-row td:nth-child(-n+5) { background: #c6c6c6; border-color: #a2a2a2; }
.pick-row td.cur { background: #fff; }
.selection { position: absolute; left: 28px; top: 46px; width: 441px; height: 367px; border: 2px solid #217346; border-left-width: 1px; }
.selection i { position: absolute; right: -4px; bottom: -4px; width: 7px; height: 7px; background: #217346; border: 1px solid #fff; }

/* menus */
.menu { position: absolute; background: #fff; border: 1px solid #c6c6c6; box-shadow: 2px 2px 4px rgba(0, 0, 0, .2); display: flex; flex-direction: column; padding: 1px; color: #262626; }
.main-menu { left: 824px; top: 137px; width: 208px; padding-bottom: 2px; }
.sub-menu { left: 1030px; top: 139px; width: 156px; padding-bottom: 2px; }
.item { height: 48px; flex: none; display: flex; align-items: center; text-align: left; padding: 6px 4px 0 16px; gap: 6px; font-weight: bold; white-space: nowrap; }
.item .go { margin: 0 3px 6px 0; }
.item span { flex: 1; }
.item.hot { background: #d0cecd; }
.item.small { height: 30px; font-weight: normal; padding: 1px 4px 0 12px; gap: 9px; }
.item.small .go { margin-bottom: 2px; }
.menu hr { flex: none; height: 3px; background: linear-gradient(#dcdcdc, #dcdcdc) 0 1px / 100% 1px no-repeat; }
.menu hr.indent { margin-left: 44px; }
.sub-menu .item.small { padding: 2px 0 0 37px; }
.item u { text-underline-offset: 2px; }
.glyph { font: 12px "Open Sans", sans-serif; fill: #444; }

/* callouts */
.mark { position: absolute; border: 3px solid #fb3838; }
.mark-table { left: 26px; top: 255px; width: 453px; height: 372px; }
.mark-button { left: 820px; top: 56px; width: 66px; height: 81px; }
.mark-highlight { left: 831px; top: 138px; width: 197px; height: 50px; }
.mark-duplicate { left: 1031px; top: 430px; width: 150px; height: 50px; }
.note { position: absolute; display: flex; align-items: center; gap: 9px; }
.note b { width: 20px; height: 20px; border-radius: 50%; background: #fb3838; color: #fff; font-weight: normal; font-size: 13px; line-height: 20px; text-align: center; }
.note span { position: relative; height: 34px; line-height: 34px; padding: 0 12px 0 6px; border-radius: 4px; background: rgba(80, 80, 80, .88); color: #fff; font-size: 16px; white-space: nowrap; }
.note span::before { content: ""; position: absolute; left: -5px; top: 12px; border: 5px solid transparent; border-left: 0; border-right-color: rgba(80, 80, 80, .88); }
.note-one { left: 484px; top: 259px; }
.note-two { left: 889px; top: 36px; }
.watermark { position: absolute; right: 8px; bottom: 8px; font: 16px/20px "Liberation Sans", sans-serif; color: rgba(130, 130, 130, .25); }
```
